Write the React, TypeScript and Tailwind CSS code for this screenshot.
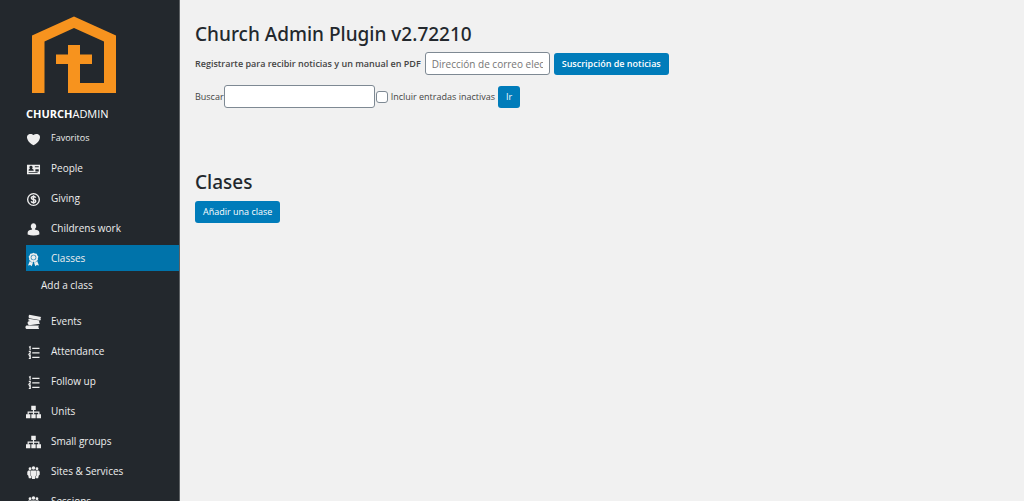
import type { ReactNode } from 'react';
import clsx from 'clsx';

interface MenuItem {
  label: string;
  icon: ReactNode;
  small?: boolean;
  active?: boolean;
  children?: string[];
}

const heart = (
  <path d="M10 17.600c3.500-1.400 6-4 7.500-6.600 1.400-2.600 1.600-5.100.4-6.600-1.100-1.400-2.500-1.900-4-1.900S11 3.100 10 4.100C9 3.100 7.600 2.500 6.100 2.500s-2.900.5-4 1.900C.9 5.900 1.100 8.400 2.500 11c1.400 2.600 4 5.200 7.500 6.600z" />
);

const card = (
  <path
    fillRule="evenodd"
    d="M1.300 3.500h17.400v12.800H1.300V3.500zM6.600 5a2 2 0 0 0-1.300 3.600L3.500 10.300v1.500h6.700v-1.500L8 8.600A2 2 0 0 0 6.600 5zM11.800 5.500H17V7h-5.200V5.500zM12.500 9.500H17v3h-4.500v-3zM3.500 13.500h12v1h-12v-1z"
  />
);

const dollar = (
  <>
    <circle cx="10" cy="10" r="7.800" fill="none" stroke="currentColor" strokeWidth="1.800" />
    <path
      d="M12.900 7.600C12.500 6.500 11.400 6 10 6c-1.700 0-2.900.7-2.900 2 0 2.900 5.900 1.200 5.900 4 0 1.300-1.200 2.100-3 2.100-1.600 0-2.700-.6-3.100-1.800M10 4.200v11.600"
      fill="none"
      stroke="currentColor"
      strokeWidth="1.900"
    />
  </>
);

const person = (
  <path d="M10 1.800a3.700 3.900 0 0 1 2.100 7.100l-.3 1 3.800 1.100c1.500.5 2.200 1.700 2.200 3.500v2.200c-4.600 1.700-11 1.700-15.600 0v-2.200c0-1.800.7-3 2.200-3.500l3.800-1.100-.3-1A3.700 3.900 0 0 1 10 1.800z" />
);

const award = (
  <>
    <path
      fillRule="evenodd"
      d="M10 1l2 1 2.300.2.800 2.200 1.400 1.800-.7 2.200v2.200l-2 1.300-1.400 1.700-2.400-.5-2.400.5-1.400-1.700-2-1.300V8.400l-.7-2.200 1.400-1.800.8-2.200L8 2l2-1zm0 2.600a3.700 3.700 0 1 0 0 7.400 3.700 3.700 0 0 0 0-7.400z"
    />
    <circle cx="10" cy="7.300" r="2.900" />
    <path d="M5.200 11.800l1.700 2 2.600-.2L7.600 19l-2-1.700-2.900.6 2.500-6.100zM14.800 11.800l-1.700 2-2.600-.2 1.900 5.400 2-1.700 2.900.6-2.500-6.100z" />
  </>
);

const books = (
  <>
    <path d="M4.500-.5l15.800 3.200-1 1.300.5 2.900L4.500 4.300C3.200 3.500 3.200.4 4.500-.5z" />
    <path d="M18.500 7.400l-1.200 1.700 1.300 2.700-14.500 1.800c-1.800-.4-2.700-3.700-1.300-4.800l2.500-.7-2.300-1 .5-2.200 15 2.500z" />
    <path d="M.5 14h16.800l-.9 1.900 1.100 2.700H.5c-1.700-.7-1.700-4 0-4.600z" />
  </>
);

const numberedList = (
  <g fill="none" stroke="currentColor" strokeWidth="1.500">
    <path d="M8.300 4.500H18M8.300 10.500H18M8.300 16.500H18" />
    <path d="M4 3l1.500-.7v4.400M3.700 8.500h2v1.600l-1.800 2h2.400M3.700 14.200h2v3.800h-2M4.200 16h1.600" />
  </g>
);

const sitemap = (
  <>
    <path d="M7 1h6v5.600H7zM0 12.300h5.800v5.500H0zM7.100 12.300h5.800v5.500H7.100zM14.200 12.300H20v5.500h-5.800z" />
    <path d="M10 6.500v6M2.900 13V9.600h14.200V13" fill="none" stroke="currentColor" strokeWidth="1.600" />
  </>
);

const group = (
  <>
    <circle cx="10" cy="4" r="2.300" />
    <circle cx="5.400" cy="5" r="1.900" />
    <circle cx="14.600" cy="5" r="1.900" />
    <path d="M6.700 7.200h6.600l.3 7-1.400.5-.3 4H8.100l-.3-4-1.400-.5.300-7z" />
    <path d="M6.200 7.400H3.200L1.700 9v4l1.300 1 .8 3.500h3.400l.2-2.500-1.400-.6.200-7zM13.800 7.400h3L18.300 9v4l-1.300 1-.8 3.500h-3.400l-.2-2.500 1.400-.6-.2-7z" />
  </>
);

const menu: MenuItem[] = [
  { label: 'Favoritos', icon: heart, small: true },
  { label: 'People', icon: card },
  { label: 'Giving', icon: dollar },
  { label: 'Childrens work', icon: person },
  { label: 'Classes', icon: award, active: true, children: ['Add a class'] },
  { label: 'Events', icon: books },
  { label: 'Attendance', icon: numberedList },
  { label: 'Follow up', icon: numberedList },
  { label: 'Units', icon: sitemap },
  { label: 'Small groups', icon: sitemap },
  { label: 'Sites & Services', icon: group },
  { label: 'Sessions', icon: group },
];

function Logo() {
  return (
    <svg viewBox="0 0 84 78" className="ml-[6px] w-[84px] h-[78px]" fill="#f7931e" aria-hidden="true">
      <path
        fillRule="evenodd"
        d="M0 19.500L42 .5l42 19V77H36V48H24V38.500h12V29h12v9.500h12V48H48v19h24V25.500L42 12 12.500 25.500V77H0V19.500z"
      />
    </svg>
  );
}

function Sidebar() {
  return (
    <aside className="w-[180px] shrink-0 bg-[#23282d] border-r border-[#5d6164] pl-[26px] pt-4 text-[#eee] overflow-hidden">
      <Logo />
      <div className="mt-3 mb-[3px] text-[11px] leading-4 text-white">
        <b className="font-bold">CHURCH</b>ADMIN
      </div>
      <nav>
        <ul className="flex flex-col gap-1">
          {menu.map((item) => (
            <li key={item.label} className="flex flex-col gap-1">
              <a
                href="#"
                className={clsx(
                  'flex h-[26px] items-center gap-[10px]',
                  item.small ? 'text-[9px]' : 'text-[10px]',
                  item.active && 'bg-[#0073aa]',
                )}
              >
                <svg
                  viewBox="0 0 20 20"
                  className="mt-[3px] size-[15px] shrink-0 overflow-visible"
                  fill="currentColor"
                  aria-hidden="true"
                >
                  {item.icon}
                </svg>
                {item.label}
              </a>
              {item.children && (
                <ul className="pb-[9px]">
                  {item.children.map((child) => (
                    <li key={child}>
                      <a href="#" className="block pl-[15px] text-[10px] leading-5">
                        {child}
                      </a>
                    </li>
                  ))}
                </ul>
              )}
            </li>
          ))}
        </ul>
      </nav>
    </aside>
  );
}

const fieldClass = 'h-[23px] rounded-[3px] border border-[#7e8993] bg-white px-[6px] text-[10px] placeholder:text-[#757575]';
const buttonClass = 'h-[22px] rounded-[3px] bg-[#007cba] px-2 text-[9px] text-white';
const headingClass = "font-['Noto_Sans','Open_Sans',sans-serif] text-[19px] leading-7 font-medium text-[#23282d]";

export default function App() {
  return (
    <div className="flex h-screen overflow-hidden bg-[#f1f1f1] font-['Open_Sans','Noto_Sans',sans-serif] text-[9px] text-[#444]">
      <Sidebar />
      <main className="flex-1 pl-[15px] pt-5">
        <h1 className={headingClass}>Church Admin Plugin v2.72210</h1>

        <form className="mt-1 flex items-center gap-1">
          <label htmlFor="email" className="font-semibold">
            Registrarte para recibir noticias y un manual en PDF
          </label>
          <input
            id="email"
            type="email"
            placeholder="Dirección de correo electrónico"
            className={clsx(fieldClass, 'w-[125px]')}
          />
          <button type="button" className={clsx(buttonClass, 'font-semibold')}>
            Suscripción de noticias
          </button>
        </form>

        <form className="mt-[10px] flex items-center">
          <label htmlFor="search">Buscar</label>
          <input id="search" type="text" className={clsx(fieldClass, 'w-[151px]')} />
          <input
            id="inactive"
            type="checkbox"
            className="ml-px mr-[3px] size-3 appearance-none rounded-[3px] border border-[#7e8993] bg-white"
          />
          <label htmlFor="inactive">Incluir entradas inactivas</label>
          <button type="button" className={clsx(buttonClass, 'ml-[3px]')}>
            Ir
          </button>
        </form>

        <h2 className={clsx(headingClass, 'mt-[60px]')}>Clases</h2>
        <button type="button" className={clsx(buttonClass, 'mt-[5px]')}>
          Añadir una clase
        </button>
      </main>
    </div>
  );
}
